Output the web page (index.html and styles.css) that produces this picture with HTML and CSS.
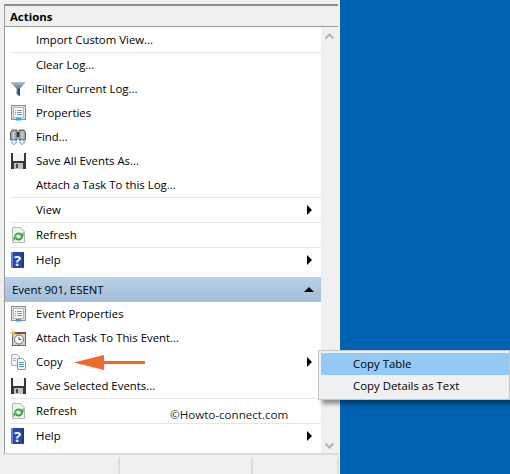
FILE: index.html
```html
<!DOCTYPE html>
<html lang="en">
<head>
<meta charset="utf-8">
<title>Actions</title>
<link rel="stylesheet" href="styles.css">
</head>
<body>
<svg class="defs" width="0" height="0" aria-hidden="true">
  <defs>
    <linearGradient id="g-filter" x1="0" y1="0" x2="0" y2="1">
      <stop offset="0" stop-color="#b9c4ce"/>
      <stop offset=".35" stop-color="#6f8ba3"/>
      <stop offset="1" stop-color="#4d6b85"/>
    </linearGradient>
    <symbol id="i-filter" viewBox="0 0 16 16">
      <path d="M0 1H16L10 7.500V15L6.500 13V7.500Z" fill="url(#g-filter)"/>
      <path d="M8 7.500H10V15L8 14Z" fill="#2f4a63"/>
    </symbol>
    <symbol id="i-props" viewBox="0 0 16 16">
      <rect x="1.500" y="0.500" width="14" height="14" fill="#dfe3e7" stroke="#8b8f94"/>
      <rect x="3.500" y="2.500" width="10" height="10" fill="#fbfbfc" stroke="#b0b5ba"/>
      <path d="M5 5.500H6M7 5.500H12M5 7.500H6M7 7.500H12M5 9.500H6M7 9.500H12" stroke="#7f93a8"/>
      <rect x="6" y="13" width="5" height="2.500" fill="#2aa5ec"/>
    </symbol>
    <symbol id="i-find" viewBox="0 0 16 16">
      <path d="M.5 11V4L2 1H7V11Z" fill="#a3a8ae" stroke="#55595e"/>
      <path d="M15.500 11V4L14 1H9V11Z" fill="#a3a8ae" stroke="#55595e"/>
      <rect x="7" y="3" width="2" height="5" fill="#30343a"/>
      <path d="M3.500 3V10M12.500 3V10" stroke="#cfd3d6" stroke-width="1.500"/>
      <circle cx="4" cy="13" r="2.300" fill="#dff0fd" stroke="#1d7fe0" stroke-dasharray="1.500 1"/>
      <circle cx="12" cy="13" r="2.300" fill="#dff0fd" stroke="#1d7fe0" stroke-dasharray="1.500 1"/>
    </symbol>
    <symbol id="i-save" viewBox="0 0 16 16">
      <path d="M1 0H16V16H1Z" fill="#35383b"/>
      <rect x="3" y="0" width="11" height="8" fill="#f6f6f6"/>
      <rect x="4" y="10" width="9" height="6" fill="#bfc1c3"/>
      <rect x="6" y="11" width="2" height="4" fill="#44484c"/>
    </symbol>
    <symbol id="i-refresh" viewBox="0 0 16 16">
      <path d="M2.500 .5H10.500L14.500 4.500V15.500H2.500Z" fill="#eef1ec" stroke="#b4b8b2"/>
      <path d="M5 9.500A3.500 3.500 0 0 1 11 7.500" fill="none" stroke="#2fae3a" stroke-width="2"/>
      <path d="M12 9A3.500 3.500 0 0 1 6 11.500" fill="none" stroke="#2fae3a" stroke-width="2"/>
      <path d="M9.500 9H13.500V5Z" fill="#2fae3a"/>
      <path d="M7.500 10H3.500V14Z" fill="#2fae3a"/>
    </symbol>
    <symbol id="i-help" viewBox="0 0 16 16">
      <rect x="1" y="0" width="13" height="16" fill="#2b47ac"/>
      <rect x="1" y="0" width="2" height="16" fill="#6480d6"/>
      <rect x="12" y="0" width="2" height="16" fill="#23378a"/>
      <text class="help-mark" x="7.500" y="13.500">?</text>
    </symbol>
    <symbol id="i-task" viewBox="0 0 16 16">
      <rect x="2.500" y="2.500" width="13" height="13" fill="#d8d3c8" stroke="#6f6a60"/>
      <path d="M2 2H16V4H2Z" fill="#7c4d3a"/>
      <circle cx="9" cy="9.500" r="4.500" fill="#fbfbf8" stroke="#6f6b62"/>
      <path d="M9 7V9.500H11.500" fill="none" stroke="#4a4843"/>
      <path d="M3 0L4 2L6 3L4 4L3 6L2 4L0 3L2 2Z" fill="#f5b52a"/>
    </symbol>
    <symbol id="i-copy" viewBox="0 0 16 16">
      <path d="M1.500 .5H7L9.500 3V11.500H1.500Z" fill="#f3f5f8" stroke="#a9b0b8"/>
      <path d="M7.500 4.500H12.500L15.500 7.500V15.500H7.500Z" fill="#fbfcfd" stroke="#8e99a6"/>
      <path d="M9 8.500H14M9 10.500H14M9 12.500H14" stroke="#4f92d4"/>
      <path d="M3 4.500H6M3 6.500H6" stroke="#9fb8d0"/>
    </symbol>
  </defs>
</svg>

<main class="window">
  <div class="pane">
    <h1 class="title">Actions</h1>
    <div class="body">
      <div class="list">
        <div class="row"><span class="ico"></span><span class="label">Import Custom View...</span></div>
        <hr class="sep">
        <div class="row"><span class="ico"></span><span class="label">Clear Log...</span></div>
        <div class="row"><svg class="ico"><use href="#i-filter"/></svg><span class="label">Filter Current Log...</span></div>
        <div class="row"><svg class="ico"><use href="#i-props"/></svg><span class="label">Properties</span></div>
        <div class="row"><svg class="ico"><use href="#i-find"/></svg><span class="label">Find...</span></div>
        <div class="row"><svg class="ico"><use href="#i-save"/></svg><span class="label">Save All Events As...</span></div>
        <div class="row"><span class="ico"></span><span class="label">Attach a Task To this Log...</span></div>
        <hr class="sep">
        <div class="row"><span class="ico"></span><span class="label">View</span><span class="tri"></span></div>
        <hr class="sep">
        <div class="row"><svg class="ico"><use href="#i-refresh"/></svg><span class="label">Refresh</span></div>
        <hr class="sep">
        <div class="row"><svg class="ico"><use href="#i-help"/></svg><span class="label">Help</span><span class="tri"></span></div>
        <div class="group"><span>Event 901, ESENT</span><span class="up"></span></div>
        <div class="row"><svg class="ico"><use href="#i-props"/></svg><span class="label">Event Properties</span></div>
        <div class="row"><svg class="ico"><use href="#i-task"/></svg><span class="label">Attach Task To This Event...</span></div>
        <div class="row"><svg class="ico"><use href="#i-copy"/></svg><span class="label">Copy</span><span class="tri"></span></div>
        <div class="row"><svg class="ico"><use href="#i-save"/></svg><span class="label">Save Selected Events...</span></div>
        <hr class="sep">
        <div class="row"><svg class="ico"><use href="#i-refresh"/></svg><span class="label">Refresh</span></div>
        <hr class="sep">
        <div class="row"><svg class="ico"><use href="#i-help"/></svg><span class="label">Help</span><span class="tri"></span></div>
      </div>
      <div class="scroll">
        <svg class="chev" viewBox="0 0 9 7"><path d="M.5 5.500L4.500 1.500L8.500 5.500"/></svg>
        <svg class="chev" viewBox="0 0 9 7"><path d="M.5 1.500L4.500 5.500L8.500 1.500"/></svg>
      </div>
    </div>
  </div>
  <div class="status">
    <span class="cell first"></span>
    <span class="cell second"></span>
    <span class="cell third"></span>
  </div>
</main>

<svg class="arrow" viewBox="0 0 71 15"><path d="M0 7.500L30 0V6H71V9H30V15Z"/></svg>
<div class="mark">©Howto-connect.com</div>
<div class="menu">
  <div class="item on">Copy Table</div>
  <div class="item">Copy Details as Text</div>
</div>
</body>
</html>
```
FILE: styles.css
```css
* { box-sizing: border-box; }
html, body { margin: 0; height: 100%; }
body {
  width: 510px;
  height: 474px;
  overflow: hidden;
  position: relative;
  background: linear-gradient(90deg, #00519c 0, #0063b1 14px);
  font: 11.4px/16px "Open Sans", "Noto Sans", sans-serif;
  color: #000;
}
.defs { position: absolute; }
.help-mark { font: bold 15px "Open Sans", sans-serif; fill: #eef2ff; text-anchor: middle; }
.window {
  width: 340px;
  height: 474px;
  background: #f0f0f0;
  border-right: 1px solid #f7f7f7;
  padding-top: 4px;
  display: flex;
  flex-direction: column;
}
.pane {
  margin-left: 4px;
  margin-right: 1px;
  height: 451px;
  border-top: 2px solid #8e8e8e;
  border-left: 1px solid #9a9a9a;
  border-bottom: 2px solid #dcdcdc;
  display: flex;
  flex-direction: column;
}
.title {
  margin: 0;
  height: 21px;
  padding: 3px 0 0 5px;
  font-size: 11.4px;
  font-weight: 700;
  line-height: 16px;
  background: #f0f0f0;
  border-bottom: 1px solid #9a9a9a;
  flex: none;
}
.body { flex: 1; display: flex; min-height: 0; }
.list { flex: 1; background: #fff; padding-top: 1px; min-width: 0; }
.row { height: 24px; display: flex; align-items: center; padding: 0 9px 0 5px; }
.ico { width: 16px; height: 16px; flex: none; display: block; }
.label { margin-left: 10px; flex: 1; white-space: nowrap; }
.tri {
  width: 0; height: 0;
  border-left: 5px solid #000;
  border-top: 5px solid transparent;
  border-bottom: 5px solid transparent;
}
.sep { margin: 0 0 0 5px; border: 0; height: 1px; background: #e6e6e6; }
.group {
  height: 25px;
  margin-top: 5px;
  padding: 0 7px;
  display: flex;
  align-items: center;
  justify-content: space-between;
  background: linear-gradient(#b9d1e8, #a3bdd8);
}
.up {
  width: 0; height: 0;
  border-left: 5px solid transparent;
  border-right: 5px solid transparent;
  border-bottom: 5px solid #000;
}
.scroll {
  width: 17px;
  flex: none;
  background: #f0f0f0;
  display: flex;
  flex-direction: column;
  justify-content: space-between;
  align-items: center;
  padding: 6px 0 4px;
}
.chev { width: 9px; height: 7px; }
.chev path { fill: none; stroke: #b4b4b4; stroke-width: 2; }
.status { height: 19px; display: flex; padding-top: 2px; }
.cell { border-right: 2px solid #dcdcdc; height: 17px; }
.first { width: 120px; }
.second { width: 133px; }
.third { width: 86px; }
.arrow { position: absolute; left: 74px; top: 355px; width: 71px; height: 15px; fill: #f4692a; }
.mark { position: absolute; left: 170px; top: 407px; font-size: 11.6px; color: #1a1a1a; background: #fff; }
.menu {
  position: absolute;
  left: 318px;
  top: 350px;
  width: 192px;
  height: 50px;
  padding: 2px 0 2px 2px;
  background: #f0f0f0;
  border: 1px solid #c6c6c6;
  box-shadow: 4px 4px 4px rgba(0, 0, 0, .4);
}
.item { height: 22px; padding-left: 32px; line-height: 21px; white-space: nowrap; }
.on { background: #91c9f7; }
```
